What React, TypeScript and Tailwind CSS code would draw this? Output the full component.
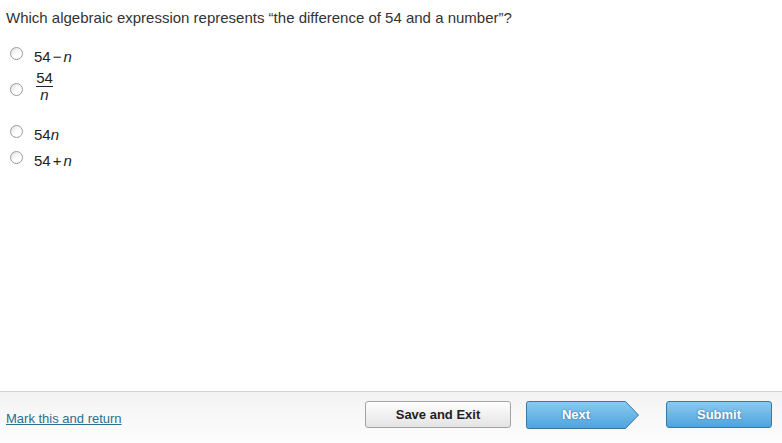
import React from "react";

function Radio({ className = "" }: { className?: string }) {
  return (
    <div
      className={`h-[13px] w-[13px] shrink-0 rounded-full border border-[#9a9a9a] bg-gradient-to-br from-[#dcdcdc] via-white to-white ${className}`}
    />
  );
}

function Op({ children }: { children: React.ReactNode }) {
  return <span className="mx-[2px]">{children}</span>;
}

export default function App() {
  return (
    <div className="flex h-[443px] w-[782px] flex-col bg-white font-['Liberation_Sans',Arial,sans-serif] text-[#333]">
      {/* Question */}
      <div className="flex-1 px-[6px] pt-[8px]">
        <p className="text-[15px] leading-[20px]">
          Which algebraic expression represents “the difference of 54 and a number”?
        </p>

        <div className="mt-[15px] pl-[4px] text-[15px] text-[#222]">
          {/* 54 - n */}
          <div className="flex h-[26px] items-start">
            <Radio className="mt-[4px]" />
            <span className="ml-[11px] mt-[6px] leading-[16px]">
              54<Op>−</Op>
              <i>n</i>
            </span>
          </div>

          {/* 54 / n */}
          <div className="flex h-[40px] items-start">
            <Radio className="mt-[14px]" />
            <div className="ml-[13px] mt-[2px] flex flex-col items-center">
              <span className="leading-[14px]">54</span>
              <span className="mt-[1px] h-px w-[17px] bg-[#222]" />
              <i className="mt-[2px] leading-[12px]">n</i>
            </div>
          </div>

          {/* 54n */}
          <div className="flex h-[26px] items-start">
            <Radio className="mt-[16px]" />
            <span className="ml-[11px] mt-[18px] leading-[16px]">
              54<i>n</i>
            </span>
          </div>

          {/* 54 + n */}
          <div className="flex h-[26px] items-start">
            <Radio className="mt-[16px]" />
            <span className="ml-[11px] mt-[18px] leading-[16px]">
              54<Op>+</Op>
              <i>n</i>
            </span>
          </div>
        </div>
      </div>

      {/* Footer */}
      <div className="flex h-[52px] items-start border-t border-[#d2d2d2] bg-gradient-to-b from-[#f3f3f3] to-[#fdfdfd] pl-[6px] pr-[10px] pt-[9px]">
        <a href="#" className="mt-[10px] text-[13px] leading-[16px] text-[#2c6e8e] underline">
          Mark this and return
        </a>

        <button className="ml-auto h-[27px] w-[146px] rounded-[3px] border border-[#a3a3a3] bg-gradient-to-b from-[#fefefe] to-[#e4e4e4] text-[13px] font-bold text-[#222]">
          Save and Exit
        </button>

        <button className="relative ml-[15px] h-[28px] w-[114px]">
          <svg className="absolute inset-0" width="114" height="28" viewBox="0 0 114 28">
            <defs>
              <linearGradient id="nextGrad" x1="0" y1="0" x2="0" y2="1">
                <stop offset="0" stopColor="#8acbf1" />
                <stop offset="1" stopColor="#4ea3dc" />
              </linearGradient>
            </defs>
            <path
              d="M2.5 0.5 H99.5 L112.5 14 L99.5 27.5 H2.5 Q0.5 27.5 0.5 25.5 V2.5 Q0.5 0.5 2.5 0.5 Z"
              fill="url(#nextGrad)"
              stroke="#3579a8"
            />
          </svg>
          <span className="relative block w-[100px] text-center text-[13px] font-bold text-white [text-shadow:0_0_2px_#2a6792]">
            Next
          </span>
        </button>

        <button className="ml-[26px] h-[27px] w-[106px] rounded-[3px] border border-[#3579a8] bg-gradient-to-b from-[#8acbf1] to-[#4ea3dc] text-[13px] font-bold text-white [text-shadow:0_0_2px_#2a6792]">
          Submit
        </button>
      </div>
    </div>
  );
}
